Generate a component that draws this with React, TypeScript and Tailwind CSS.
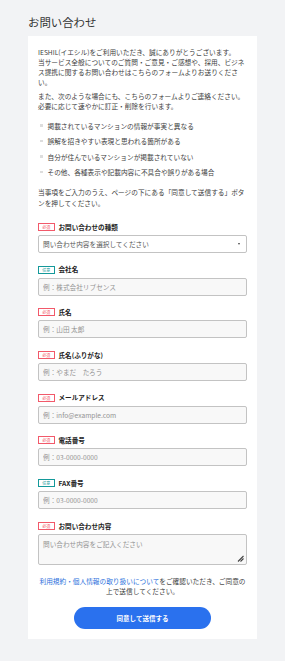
import React from "react";

const font = { fontFamily: '"Noto Sans CJK JP", "Noto Sans", sans-serif' };

type Field = {
  label: string;
  required: boolean;
  placeholder: string;
  kind?: "select" | "textarea";
};

const fields: Field[] = [
  { label: "お問い合わせの種類", required: true, placeholder: "問い合わせ内容を選択してください", kind: "select" },
  { label: "会社名", required: false, placeholder: "例：株式会社リブセンス" },
  { label: "氏名", required: true, placeholder: "例：山田 太郎" },
  { label: "氏名(ふりがな)", required: true, placeholder: "例：やまだ　たろう" },
  { label: "メールアドレス", required: true, placeholder: "例：info@example.com" },
  { label: "電話番号", required: true, placeholder: "例：03-0000-0000" },
  { label: "FAX番号", required: false, placeholder: "例：03-0000-0000" },
  { label: "お問い合わせ内容", required: true, placeholder: "問い合わせ内容をご記入ください", kind: "textarea" },
];

const cases = [
  "掲載されているマンションの情報が事実と異なる",
  "誤解を招きやすい表現と思われる箇所がある",
  "自分が住んでいるマンションが掲載されていない",
  "その他、各種表示や記載内容に不具合や誤りがある場合",
];

function Badge({ required }: { required: boolean }) {
  return (
    <span
      className={`flex h-[8px] w-[16.5px] shrink-0 items-center justify-center border text-[4px] leading-none ${
        required ? "border-[#f2596a] text-[#f2596a]" : "border-[#14999a] text-[#14999a]"
      }`}
    >
      {required ? "必須" : "任意"}
    </span>
  );
}

function FormField({ field }: { field: Field }) {
  return (
    <div className="flex flex-col">
      <div className="flex h-[10px] items-center gap-[4px]">
        <Badge required={field.required} />
        <span className="text-[6.6px] font-bold leading-none text-[#222]">{field.label}</span>
      </div>
      {field.kind === "select" ? (
        <div className="mt-[3px] flex h-[18px] items-center justify-between rounded-[2px] border border-[#c3c3c3] bg-white pl-[4px] pr-[6px]">
          <span className="text-[6.65px] leading-none text-[#555]">{field.placeholder}</span>
          <span className="h-0 w-0 border-x-[1.5px] border-t-[2px] border-x-transparent border-t-[#444]" />
        </div>
      ) : field.kind === "textarea" ? (
        <div className="relative mt-[3px] h-[31px] rounded-[2px] border border-[#c3c3c3] bg-[#f8f8f8]">
          <textarea
            readOnly
            placeholder={field.placeholder}
            className="h-full w-full resize-none bg-transparent px-[4px] pt-[4px] text-[6.65px] leading-[10px] placeholder:text-[#939393] outline-none"
            style={font}
          />
          <svg className="absolute bottom-[2px] right-[2px]" width="7" height="7" viewBox="0 0 7 7">
            <path d="M1 6.5 L6.5 1 M3.5 6.5 L6.5 3.5" stroke="#444" strokeWidth="1.1" />
          </svg>
        </div>
      ) : (
        <input
          readOnly
          placeholder={field.placeholder}
          className="mt-[3px] h-[18px] rounded-[2px] border border-[#c3c3c3] bg-[#f8f8f8] px-[4px] text-[6.65px] leading-none placeholder:text-[#939393] outline-none"
          style={font}
        />
      )}
    </div>
  );
}

export default function App() {
  return (
    <div className="min-h-screen bg-[#f2f3f5] px-[28px] pb-[23px] pt-[15px] text-[#3d3d3d]" style={font}>
      <h1 className="text-[11.4px] font-normal leading-[15px] text-[#333]">お問い合わせ</h1>

      <div className="mt-[6px] bg-white px-[10px] pb-[10px] pt-[11px] text-[6.68px] leading-[10px]">
        <p>
          IESHIL(イエシル)をご利用いただき、誠にありがとうございます。
          <br />
          当サービス全般についてのご質問・ご意見・ご感想や、採用、ビジネス提携に関するお問い合わせはこちらのフォームよりお送りください。
        </p>
        <p className="mt-[4px]">
          また、次のような場合にも、こちらのフォームよりご連絡ください。
          <br />
          必要に応じて速やかに訂正・削除を行います。
        </p>

        <ul className="mt-[9.5px] flex flex-col gap-[5.5px]">
          {cases.map((c) => (
            <li key={c} className="flex items-center gap-[5px] pl-[2px]">
              <span className="h-[2.5px] w-[2.5px] shrink-0 bg-[#ddd]" />
              <span>{c}</span>
            </li>
          ))}
        </ul>

        <p className="mt-[10px] leading-[10.5px]">
          当事項をご入力のうえ、ページの下にある「同意して送信する」ボタンを押してください。
        </p>

        <div className="mt-[14px] flex flex-col gap-[11.7px]">
          {fields.map((f) => (
            <FormField key={f.label} field={f} />
          ))}
        </div>

        <p className="mt-[11.5px] text-center">
          <span className="text-[#2a6fdc]">利用規約・個人情報の取り扱いについて</span>
          をご確認いただき、ご同意の
          <br />
          上で送信してください。
        </p>

        <div className="mt-[10.5px] flex justify-center">
          <button className="h-[22px] w-[137px] rounded-full bg-[#2a71ee] text-[6.5px] font-bold text-white">
            同意して送信する
          </button>
        </div>
      </div>
    </div>
  );
}
